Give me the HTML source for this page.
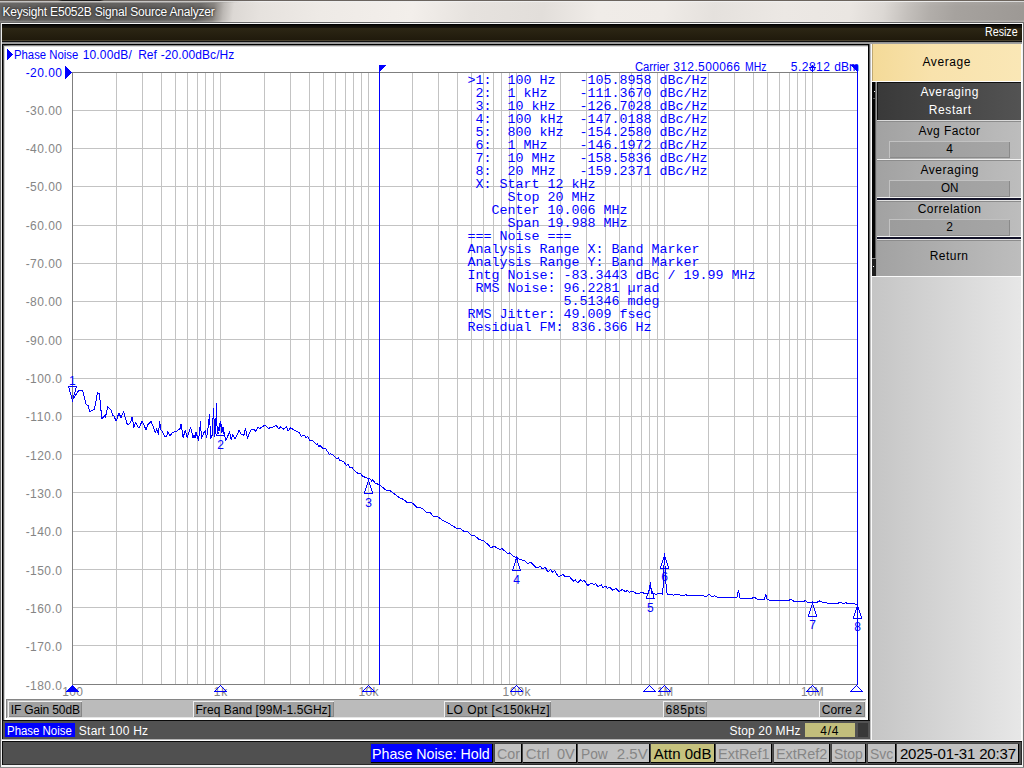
<!DOCTYPE html>
<html lang="en"><head><meta charset="utf-8"><title>Keysight E5052B Signal Source Analyzer</title>
<style>
html,body{margin:0;padding:0;width:1024px;height:768px;overflow:hidden;background:#fff}
body{position:relative;font-family:'Liberation Sans', sans-serif;font-size:12px}
#scr div{position:absolute;box-sizing:border-box}
#scr span{position:absolute;white-space:pre;font-family:'Liberation Sans', sans-serif}
#plot{position:absolute;left:0;top:0;font-family:'Liberation Sans', sans-serif}
#mk{position:absolute;left:467.5px;top:74.35px;margin:0;font-family:'Liberation Mono', monospace;font-size:13.333px;line-height:13px;color:#0000ff;white-space:pre}
</style></head><body><div id="scr" style="position:absolute;left:0;top:0;width:1024px;height:768px;overflow:hidden">
<div style="left:0px;top:0px;width:1024px;height:22px;background:linear-gradient(180deg,rgba(255,255,255,.08) 0,rgba(255,255,255,0) 30%,rgba(255,255,255,0) 90%,rgba(255,255,255,.25) 100%),linear-gradient(97deg,#666462 0,#5d5b59 60px,#605e5c 150px,#6a6866 200px,#85817d 213px,#bcb8b4 223px,#dcd8d4 233px,#e6e2de 260px,#eeeae6 320px,#f3efeb 410px,#e6e2de 470px,#e2deda 540px,#f0ece8 595px,#efebe7 660px,#e5e1dd 710px,#ece8e4 780px,#eae6e2 845px,#dcd8d4 878px,#c4c0bc 902px,#b2aeaa 924px,#a6a29e 950px,#9c9894 1024px);"></div>
<div style="left:0px;top:0px;width:1024px;height:1px;background:linear-gradient(90deg,#5e564e 0,#5e564e 58px,#1c1a18 62px,#1c1a18 100px,#6a6460 104px,#6c645c 1024px);"></div>
<div style="left:0px;top:1px;width:1024px;height:1px;background:linear-gradient(90deg,#c4c2c0 0,#c8c6c4 200px,#efefef 260px,#efefef 900px,#d8d8d8 1024px);"></div>
<div style="left:0px;top:2px;width:1024px;height:1px;background:linear-gradient(90deg,rgba(160,158,156,.8) 0,rgba(160,158,156,.8) 200px,rgba(255,255,255,0) 240px);"></div>
<div style="left:0px;top:22px;width:1px;height:746px;background:#6c6c6c;"></div>
<div style="left:1px;top:22px;width:1px;height:745px;background:#ececec;"></div>
<div style="left:1023px;top:22px;width:1px;height:746px;background:#707070;"></div>
<div style="left:1022px;top:22px;width:1px;height:745px;background:#f4f4f4;"></div>
<div style="left:1px;top:22px;width:1022px;height:1px;background:#6a6a6a;"></div>
<div style="left:1px;top:23px;width:1022px;height:1px;background:#f6f6f6;"></div>
<div style="left:1px;top:765px;width:1022px;height:2px;background:#f4f4f4;"></div>
<div style="left:0px;top:767px;width:1024px;height:1px;background:#8c8c8c;"></div>
<div style="left:2px;top:24px;width:1020px;height:18px;background:linear-gradient(180deg,#000 0,#000 1px,#0c0a06 1px,#0c0a06 2px,#12100a 2px,#12100a 3px,#18140c 3px,#18140c 4px,#2c2614 4px,#201a0c 16px,#4a4230 16px,#4a4230 17px,#101010 17px);"></div>
<div style="left:2px;top:42px;width:1020px;height:2px;background:linear-gradient(180deg,#8e8e8e,#a6a6a6);"></div>
<div style="left:2px;top:44px;width:868px;height:677px;background:#000;"></div>
<div style="left:3px;top:45px;width:865px;height:675px;background:#fff;"></div>
<div style="left:3px;top:45px;width:865px;height:1px;background:linear-gradient(90deg,#555,#8a8a8a 8px,#8a8a8a);"></div>
<div style="left:3px;top:46px;width:865px;height:1px;background:#dcdcdc;"></div>
<div style="left:3px;top:45px;width:1px;height:675px;background:#5a5a5a;"></div>
<div style="left:4px;top:46px;width:1px;height:674px;background:#cfcfcf;"></div>
<div style="left:869px;top:44px;width:1px;height:677px;background:#5c5c5c;"></div>
<div style="left:870px;top:44px;width:1px;height:696px;background:#bdbdbd;"></div>
<div style="left:871px;top:44px;width:1px;height:696px;background:#fafafa;"></div>
<div style="left:6px;top:699px;width:860px;height:19px;background:#bbbbbb;box-shadow:inset 1px 1px 0 #858585,inset -1px -1px 0 #e6e6e6;"></div>
<div style="left:8px;top:701px;width:74px;height:16px;background:#a1a1a1;box-shadow:inset 1px 1px 0 #f0f0f0,inset -1px -1px 0 #868686;"></div>
<div style="left:193px;top:701px;width:140.5px;height:16px;background:#a1a1a1;box-shadow:inset 1px 1px 0 #f0f0f0,inset -1px -1px 0 #868686;"></div>
<div style="left:444px;top:701px;width:107px;height:16px;background:#a1a1a1;box-shadow:inset 1px 1px 0 #f0f0f0,inset -1px -1px 0 #868686;"></div>
<div style="left:663px;top:701px;width:43.5px;height:16px;background:#a1a1a1;box-shadow:inset 1px 1px 0 #f0f0f0,inset -1px -1px 0 #868686;"></div>
<div style="left:819px;top:701px;width:46px;height:16px;background:#a1a1a1;box-shadow:inset 1px 1px 0 #f0f0f0,inset -1px -1px 0 #868686;"></div>
<div style="left:2px;top:720px;width:868px;height:19px;background:#525252;box-shadow:inset 0 1px 0 #0a0a0a,inset 1px 0 0 #0a0a0a;"></div>
<div style="left:2px;top:739px;width:868px;height:1px;background:#b4b4b4;"></div>
<div style="left:5px;top:723px;width:69.5px;height:14px;background:#0000ff;"></div>
<div style="left:804.5px;top:723px;width:50.5px;height:14px;background:#c2be7c;"></div>
<div style="left:857.5px;top:723px;width:10.5px;height:14px;background:#383838;"></div>
<div style="left:872px;top:44px;width:149px;height:696px;background:linear-gradient(90deg,#c5c5c5,#e7e7e7);"></div>
<div style="left:1021px;top:44px;width:1px;height:696px;background:#fcfcfc;"></div>
<div style="left:872px;top:44px;width:149px;height:37px;background:linear-gradient(90deg,#f4da98,#f8e2ac 40%,#fae7b6);box-shadow:inset 1px 0 0 #bfa873;"></div>
<div style="left:872px;top:81px;width:149px;height:1px;background:#fdfdfd;"></div>
<div style="left:872px;top:82px;width:3px;height:176px;background:#030303;"></div>
<div style="left:875px;top:82px;width:1px;height:194px;background:#5c5c5c;"></div>
<div style="left:876px;top:82px;width:1px;height:194px;background:#9a9a9a;"></div>
<div style="left:872px;top:258px;width:4px;height:18px;background:#1e1e1e;"></div>
<div style="left:873px;top:266px;width:1px;height:1px;background:#fff;"></div>
<div style="left:872px;top:258px;width:4px;height:1px;background:#8a8a8a;"></div>
<div style="left:874px;top:91px;width:1px;height:1px;background:#f0f0f0;"></div>
<div style="left:873px;top:98px;width:2px;height:1px;background:#555;"></div>
<div style="left:877px;top:82px;width:144px;height:38px;background:linear-gradient(90deg,#393939,#535353);box-shadow:inset 0 1px 0 #101010,inset 1px 0 0 #101010;"></div>
<div style="left:877px;top:120px;width:144px;height:1px;background:#dadada;"></div>
<div style="left:877px;top:121px;width:144px;height:38px;background:linear-gradient(90deg,#a2a2a2,#bdbdbd);box-shadow:inset 0 1px 0 #8c8c8c;"></div>
<div style="left:877px;top:159px;width:144px;height:1px;background:#f2f2f2;"></div>
<div style="left:889px;top:141px;width:121px;height:16.5px;background:linear-gradient(90deg,#9c9c9c,#a6a6a6);box-shadow:inset 1px 1px 0 #c2c2c2,inset -1px -1px 0 #8a8a8a;"></div>
<div style="left:877px;top:160px;width:144px;height:37px;background:linear-gradient(90deg,#a2a2a2,#bdbdbd);box-shadow:inset 0 1px 0 #8c8c8c;"></div>
<div style="left:877px;top:197px;width:144px;height:1px;background:#f2f2f2;"></div>
<div style="left:877px;top:198px;width:144px;height:2px;background:#14142a;"></div>
<div style="left:877px;top:200px;width:144px;height:1px;background:#e2e2e2;"></div>
<div style="left:889px;top:180px;width:121px;height:16.5px;background:linear-gradient(90deg,#9c9c9c,#a6a6a6);box-shadow:inset 1px 1px 0 #c2c2c2,inset -1px -1px 0 #8a8a8a;"></div>
<div style="left:877px;top:201px;width:144px;height:35px;background:linear-gradient(90deg,#a2a2a2,#bdbdbd);box-shadow:inset 0 1px 0 #8c8c8c;"></div>
<div style="left:877px;top:236px;width:144px;height:1px;background:#f2f2f2;"></div>
<div style="left:877px;top:237px;width:144px;height:2px;background:#14142a;"></div>
<div style="left:877px;top:239px;width:144px;height:1px;background:#e2e2e2;"></div>
<div style="left:889px;top:219px;width:121px;height:16.5px;background:linear-gradient(90deg,#9c9c9c,#a6a6a6);box-shadow:inset 1px 1px 0 #c2c2c2,inset -1px -1px 0 #8a8a8a;"></div>
<div style="left:877px;top:240px;width:144px;height:36px;background:linear-gradient(90deg,#a2a2a2,#bdbdbd);box-shadow:inset 0 1px 0 #8c8c8c;"></div>
<div style="left:877px;top:276px;width:144px;height:1px;background:#fafafa;"></div>
<div style="left:872px;top:276px;width:5px;height:1px;background:#fafafa;"></div>
<div style="left:2px;top:740px;width:1020px;height:1px;background:#fcfcfc;"></div>
<div style="left:2px;top:741px;width:1020px;height:24px;background:#505050;box-shadow:inset 0 1px 0 #0a0a0a,inset 1px 0 0 #0a0a0a,inset 0 -1px 0 #2a2a2a,inset -1px 0 0 #2a2a2a;"></div>
<div style="left:369.5px;top:743px;width:123.5px;height:20px;background:#000;box-shadow:inset 1px 1px 0 #444;"></div>
<div style="left:370.5px;top:744px;width:121.5px;height:18px;background:#0000ff;"></div>
<div style="left:493.7px;top:743px;width:28.30000000000001px;height:20px;background:#000;box-shadow:inset 1px 1px 0 #444;"></div>
<div style="left:494.7px;top:744px;width:26.30000000000001px;height:18px;background:#c2c2c2;"></div>
<div style="left:522.4px;top:743px;width:54.89999999999998px;height:20px;background:#000;box-shadow:inset 1px 1px 0 #444;"></div>
<div style="left:523.4px;top:744px;width:52.89999999999998px;height:18px;background:#c2c2c2;"></div>
<div style="left:577.3px;top:743px;width:72.70000000000005px;height:20px;background:#000;box-shadow:inset 1px 1px 0 #444;"></div>
<div style="left:578.3px;top:744px;width:70.70000000000005px;height:18px;background:#c2c2c2;"></div>
<div style="left:650.4px;top:743px;width:64.20000000000005px;height:20px;background:#000;box-shadow:inset 1px 1px 0 #444;"></div>
<div style="left:651.4px;top:744px;width:62.200000000000045px;height:18px;background:#c6c27e;"></div>
<div style="left:714.6px;top:743px;width:57.89999999999998px;height:20px;background:#000;box-shadow:inset 1px 1px 0 #444;"></div>
<div style="left:715.6px;top:744px;width:55.89999999999998px;height:18px;background:#c2c2c2;"></div>
<div style="left:772.7px;top:743px;width:57.39999999999998px;height:20px;background:#000;box-shadow:inset 1px 1px 0 #444;"></div>
<div style="left:773.7px;top:744px;width:55.39999999999998px;height:18px;background:#c2c2c2;"></div>
<div style="left:830.6px;top:743px;width:35.799999999999955px;height:20px;background:#000;box-shadow:inset 1px 1px 0 #444;"></div>
<div style="left:831.6px;top:744px;width:33.799999999999955px;height:18px;background:#c2c2c2;"></div>
<div style="left:866.6px;top:743px;width:29.399999999999977px;height:20px;background:#000;box-shadow:inset 1px 1px 0 #444;"></div>
<div style="left:867.6px;top:744px;width:27.399999999999977px;height:18px;background:#c2c2c2;"></div>
<div style="left:896px;top:743px;width:123px;height:20px;background:#000;box-shadow:inset 1px 1px 0 #444;"></div>
<div style="left:897px;top:744px;width:121px;height:18px;background:#c2c2c2;"></div>
<span style="left:984.82px;top:24px;font-size:12px;line-height:16px;transform-origin:0 0;transform:scaleX(0.8903);color:#fff;">Resize</span>
<span style="left:2.46px;top:4px;font-size:12px;line-height:16px;letter-spacing:-0.192px;color:#fff;text-shadow:0 0 3px #222,0 0 2px #333;">Keysight E5052B Signal Source Analyzer</span>
<span style="left:10.76px;top:702px;font-size:12px;line-height:16px;letter-spacing:-0.140px;color:#000;">IF Gain 50dB</span>
<span style="left:195.46px;top:702px;font-size:12px;line-height:16px;letter-spacing:0.072px;color:#000;">Freq Band [99M-1.5GHz]</span>
<span style="left:446.46px;top:702px;font-size:12px;line-height:16px;letter-spacing:0.446px;color:#000;">LO Opt [&lt;150kHz]</span>
<span style="left:665.46px;top:702px;font-size:12px;line-height:16px;letter-spacing:0.710px;color:#000;">685pts</span>
<span style="left:821.76px;top:702px;font-size:12px;line-height:16px;letter-spacing:0.027px;color:#000;">Corre 2</span>
<span style="left:6.99px;top:723px;font-size:12px;line-height:16px;transform-origin:0 0;transform:scaleX(0.9527);color:#fff;">Phase Noise</span>
<span style="left:78.86px;top:723px;font-size:12px;line-height:16px;letter-spacing:0.225px;color:#fff;">Start 100 Hz</span>
<span style="left:729.46px;top:723px;font-size:12px;line-height:16px;letter-spacing:0.170px;color:#fff;">Stop 20 MHz</span>
<span style="left:820.26px;top:723px;font-size:12px;line-height:16px;letter-spacing:0.796px;color:#000;">4/4</span>
<span style="left:922.46px;top:54px;font-size:12px;line-height:16px;letter-spacing:0.599px;color:#000;">Average</span>
<span style="left:920.46px;top:84px;font-size:12px;line-height:16px;letter-spacing:0.506px;color:#fff;">Averaging</span>
<span style="left:928.76px;top:102px;font-size:12px;line-height:16px;letter-spacing:0.599px;color:#fff;">Restart</span>
<span style="left:918.46px;top:123px;font-size:12px;line-height:16px;letter-spacing:0.419px;color:#000;">Avg Factor</span>
<span style="left:946.16px;top:141px;font-size:12px;line-height:16px;letter-spacing:0.000px;color:#000;">4</span>
<span style="left:920.46px;top:162px;font-size:12px;line-height:16px;letter-spacing:0.531px;color:#000;">Averaging</span>
<span style="left:940.78px;top:180px;font-size:12px;line-height:16px;transform-origin:0 0;transform:scaleX(0.9693);color:#000;">ON</span>
<span style="left:917.76px;top:201px;font-size:12px;line-height:16px;letter-spacing:0.448px;color:#000;">Correlation</span>
<span style="left:946.16px;top:219px;font-size:12px;line-height:16px;letter-spacing:0.000px;color:#000;">2</span>
<span style="left:929.76px;top:248px;font-size:12px;line-height:16px;letter-spacing:0.450px;color:#000;">Return</span>
<span style="left:372.36px;top:744px;font-size:15px;line-height:20px;transform-origin:0 0;transform:scaleX(0.9480);color:#fff;">Phase Noise: Hold</span>
<span style="left:496.66px;top:744px;font-size:15px;line-height:20px;transform-origin:0 0;transform:scaleX(0.9508);color:#868686;">Cor</span>
<span style="left:525.83px;top:744px;font-size:15px;line-height:20px;letter-spacing:0.174px;color:#868686;">Ctrl</span>
<span style="left:556.85px;top:744px;font-size:15px;line-height:20px;transform-origin:0 0;transform:scaleX(0.9701);color:#868686;">0V</span>
<span style="left:580.88px;top:744px;font-size:15px;line-height:20px;transform-origin:0 0;transform:scaleX(0.9160);color:#868686;">Pow</span>
<span style="left:616.83px;top:744px;font-size:15px;line-height:20px;letter-spacing:-0.003px;color:#868686;">2.5V</span>
<span style="left:653.83px;top:744px;font-size:15px;line-height:20px;letter-spacing:0.015px;color:#000;">Attn 0dB</span>
<span style="left:717.65px;top:744px;font-size:15px;line-height:20px;transform-origin:0 0;transform:scaleX(0.9652);color:#868686;">ExtRef1</span>
<span style="left:776.15px;top:744px;font-size:15px;line-height:20px;transform-origin:0 0;transform:scaleX(0.9614);color:#868686;">ExtRef2</span>
<span style="left:834.37px;top:744px;font-size:15px;line-height:20px;transform-origin:0 0;transform:scaleX(0.9319);color:#868686;">Stop</span>
<span style="left:869.87px;top:744px;font-size:15px;line-height:20px;transform-origin:0 0;transform:scaleX(0.9296);color:#868686;">Svc</span>
<span style="left:899.93px;top:744px;font-size:15px;line-height:20px;letter-spacing:-0.153px;color:#000;">2025-01-31 20:37</span>
<span style="left:14.29px;top:47px;font-size:12px;line-height:16px;transform-origin:0 0;transform:scaleX(0.9438);color:#0000ff;">Phase Noise</span>
<span style="left:82.76px;top:47px;font-size:12px;line-height:16px;letter-spacing:0.133px;color:#0000ff;">10.00dB/</span>
<span style="left:138.26px;top:47px;font-size:12px;line-height:16px;letter-spacing:-0.104px;color:#0000ff;">Ref</span>
<span style="left:160.76px;top:47px;font-size:12px;line-height:16px;letter-spacing:0.080px;color:#0000ff;">-20.00dBc/Hz</span>
<span style="left:634.99px;top:59px;font-size:12px;line-height:16px;transform-origin:0 0;transform:scaleX(0.9356);color:#0000ff;">Carrier</span>
<span style="left:673.26px;top:59px;font-size:12px;line-height:16px;letter-spacing:0.375px;color:#0000ff;">312.500066</span>
<span style="left:744.53px;top:59px;font-size:12px;line-height:16px;transform-origin:0 0;transform:scaleX(0.8689);color:#0000ff;">MHz</span>
<span style="left:790.86px;top:59px;font-size:12px;line-height:16px;letter-spacing:0.455px;color:#0000ff;">5.2812</span>
<span style="left:834.26px;top:59px;font-size:12px;line-height:16px;letter-spacing:0.046px;color:#0000ff;">dBm</span>
<span style="left:25.66px;top:65px;font-size:12px;line-height:16px;letter-spacing:0.450px;color:#0000ff;">-20.00</span>
<span style="left:25.66px;top:103px;font-size:12px;line-height:16px;letter-spacing:0.450px;color:#858585;">-30.00</span>
<span style="left:25.66px;top:141px;font-size:12px;line-height:16px;letter-spacing:0.450px;color:#858585;">-40.00</span>
<span style="left:25.66px;top:179px;font-size:12px;line-height:16px;letter-spacing:0.450px;color:#858585;">-50.00</span>
<span style="left:25.66px;top:218px;font-size:12px;line-height:16px;letter-spacing:0.450px;color:#858585;">-60.00</span>
<span style="left:25.66px;top:256px;font-size:12px;line-height:16px;letter-spacing:0.450px;color:#858585;">-70.00</span>
<span style="left:25.66px;top:294px;font-size:12px;line-height:16px;letter-spacing:0.450px;color:#858585;">-80.00</span>
<span style="left:25.66px;top:333px;font-size:12px;line-height:16px;letter-spacing:0.450px;color:#858585;">-90.00</span>
<span style="left:25.66px;top:371px;font-size:12px;line-height:16px;letter-spacing:0.450px;color:#858585;">-100.0</span>
<span style="left:25.66px;top:409px;font-size:12px;line-height:16px;letter-spacing:0.628px;color:#858585;">-110.0</span>
<span style="left:25.66px;top:448px;font-size:12px;line-height:16px;letter-spacing:0.450px;color:#858585;">-120.0</span>
<span style="left:25.66px;top:486px;font-size:12px;line-height:16px;letter-spacing:0.450px;color:#858585;">-130.0</span>
<span style="left:25.66px;top:524px;font-size:12px;line-height:16px;letter-spacing:0.450px;color:#858585;">-140.0</span>
<span style="left:25.66px;top:563px;font-size:12px;line-height:16px;letter-spacing:0.450px;color:#858585;">-150.0</span>
<span style="left:25.66px;top:601px;font-size:12px;line-height:16px;letter-spacing:0.450px;color:#858585;">-160.0</span>
<span style="left:25.66px;top:639px;font-size:12px;line-height:16px;letter-spacing:0.450px;color:#858585;">-170.0</span>
<span style="left:25.66px;top:678px;font-size:12px;line-height:16px;letter-spacing:0.450px;color:#858585;">-180.0</span>
<span style="left:62.31px;top:684px;font-size:12px;line-height:16px;letter-spacing:0.274px;color:#858585;">100</span>
<span style="left:213.81px;top:684px;font-size:12px;line-height:16px;letter-spacing:0.893px;color:#858585;">1k</span>
<span style="left:358.56px;top:684px;font-size:12px;line-height:16px;letter-spacing:0.360px;color:#858585;">10k</span>
<span style="left:502.56px;top:684px;font-size:12px;line-height:16px;letter-spacing:0.683px;color:#858585;">100k</span>
<span style="left:656.58px;top:684px;font-size:12px;line-height:16px;transform-origin:0 0;transform:scaleX(0.9620);color:#858585;">1M</span>
<span style="left:801.33px;top:684px;font-size:12px;line-height:16px;transform-origin:0 0;transform:scaleX(0.9657);color:#858585;">10M</span>
<svg id="plot" width="1024" height="768" viewBox="0 0 1024 768" shape-rendering="crispEdges">
<rect x="116" y="72" width="1" height="612" fill="#c3c3c3"/>
<rect x="142" y="72" width="1" height="612" fill="#c3c3c3"/>
<rect x="161" y="72" width="1" height="612" fill="#c3c3c3"/>
<rect x="175" y="72" width="1" height="612" fill="#c3c3c3"/>
<rect x="187" y="72" width="1" height="612" fill="#c3c3c3"/>
<rect x="197" y="72" width="1" height="612" fill="#c3c3c3"/>
<rect x="205" y="72" width="1" height="612" fill="#c3c3c3"/>
<rect x="213" y="72" width="1" height="612" fill="#c3c3c3"/>
<rect x="264" y="72" width="1" height="612" fill="#c3c3c3"/>
<rect x="290" y="72" width="1" height="612" fill="#c3c3c3"/>
<rect x="309" y="72" width="1" height="612" fill="#c3c3c3"/>
<rect x="323" y="72" width="1" height="612" fill="#c3c3c3"/>
<rect x="335" y="72" width="1" height="612" fill="#c3c3c3"/>
<rect x="345" y="72" width="1" height="612" fill="#c3c3c3"/>
<rect x="353" y="72" width="1" height="612" fill="#c3c3c3"/>
<rect x="361" y="72" width="1" height="612" fill="#c3c3c3"/>
<rect x="220" y="72" width="1" height="612" fill="#c3c3c3"/>
<rect x="412" y="72" width="1" height="612" fill="#c3c3c3"/>
<rect x="438" y="72" width="1" height="612" fill="#c3c3c3"/>
<rect x="457" y="72" width="1" height="612" fill="#c3c3c3"/>
<rect x="471" y="72" width="1" height="612" fill="#c3c3c3"/>
<rect x="483" y="72" width="1" height="612" fill="#c3c3c3"/>
<rect x="493" y="72" width="1" height="612" fill="#c3c3c3"/>
<rect x="501" y="72" width="1" height="612" fill="#c3c3c3"/>
<rect x="509" y="72" width="1" height="612" fill="#c3c3c3"/>
<rect x="368" y="72" width="1" height="612" fill="#c3c3c3"/>
<rect x="560" y="72" width="1" height="612" fill="#c3c3c3"/>
<rect x="586" y="72" width="1" height="612" fill="#c3c3c3"/>
<rect x="605" y="72" width="1" height="612" fill="#c3c3c3"/>
<rect x="619" y="72" width="1" height="612" fill="#c3c3c3"/>
<rect x="631" y="72" width="1" height="612" fill="#c3c3c3"/>
<rect x="641" y="72" width="1" height="612" fill="#c3c3c3"/>
<rect x="649" y="72" width="1" height="612" fill="#c3c3c3"/>
<rect x="657" y="72" width="1" height="612" fill="#c3c3c3"/>
<rect x="516" y="72" width="1" height="612" fill="#c3c3c3"/>
<rect x="708" y="72" width="1" height="612" fill="#c3c3c3"/>
<rect x="734" y="72" width="1" height="612" fill="#c3c3c3"/>
<rect x="753" y="72" width="1" height="612" fill="#c3c3c3"/>
<rect x="767" y="72" width="1" height="612" fill="#c3c3c3"/>
<rect x="779" y="72" width="1" height="612" fill="#c3c3c3"/>
<rect x="789" y="72" width="1" height="612" fill="#c3c3c3"/>
<rect x="797" y="72" width="1" height="612" fill="#c3c3c3"/>
<rect x="805" y="72" width="1" height="612" fill="#c3c3c3"/>
<rect x="664" y="72" width="1" height="612" fill="#c3c3c3"/>
<rect x="812" y="72" width="1" height="612" fill="#c3c3c3"/>
<rect x="72" y="110" width="785" height="1" fill="#c3c3c3"/>
<rect x="72" y="148" width="785" height="1" fill="#c3c3c3"/>
<rect x="72" y="186" width="785" height="1" fill="#c3c3c3"/>
<rect x="72" y="225" width="785" height="1" fill="#c3c3c3"/>
<rect x="72" y="263" width="785" height="1" fill="#c3c3c3"/>
<rect x="72" y="301" width="785" height="1" fill="#c3c3c3"/>
<rect x="72" y="339" width="785" height="1" fill="#c3c3c3"/>
<rect x="72" y="378" width="785" height="1" fill="#c3c3c3"/>
<rect x="72" y="416" width="785" height="1" fill="#c3c3c3"/>
<rect x="72" y="454" width="785" height="1" fill="#c3c3c3"/>
<rect x="72" y="492" width="785" height="1" fill="#c3c3c3"/>
<rect x="72" y="531" width="785" height="1" fill="#c3c3c3"/>
<rect x="72" y="569" width="785" height="1" fill="#c3c3c3"/>
<rect x="72" y="607" width="785" height="1" fill="#c3c3c3"/>
<rect x="72" y="645" width="785" height="1" fill="#c3c3c3"/>
<rect x="72" y="72" width="786" height="1" fill="#7f7f7f"/>
<rect x="72" y="684" width="786" height="1" fill="#7f7f7f"/>
<rect x="72" y="72" width="1" height="613" fill="#7f7f7f"/>
<rect x="857" y="72" width="1" height="613" fill="#7f7f7f"/>
<polyline points="72.5,400.0 78.8,390.4 82.5,390.4 86.2,404.4 88.1,405.6 89.6,411.9 94.4,409.4 97.5,392.8 99.4,394.0 101.9,419.4 104.4,415.0 105.2,418.1 107.8,406.5 111.0,410.0 112.5,415.0 114.0,416.2 116.2,421.2 118.8,413.1 121.0,417.5 123.5,411.5 127.5,425.2 130.2,423.1 132.2,416.9 133.8,427.5 135.6,422.5 137.5,426.2 139.0,428.1 142.2,420.9 146.2,430.2 147.5,425.0 151.2,421.5 155.6,433.1 156.5,428.1 158.5,435.0 159.5,421.5 161.0,430.0 162.5,431.9 164.8,437.1 166.9,436.0 167.8,431.5 169.8,436.2 172.5,432.5 176.9,431.2 180.0,428.5 181.2,423.8 183.1,437.8 185.2,430.2 187.2,437.5 190.6,427.5 193.1,437.8 194.0,434.6 195.0,438.4 196.0,432.1 198.5,440.5 199.8,430.2 200.4,421.1 201.5,438.4 203.8,432.8 205.4,430.5 206.5,438.4 208.5,425.2 209.5,414.0 210.6,438.4 212.2,435.2 213.5,408.0 214.8,436.5 215.9,421.5 216.5,403.0 217.2,434.0 218.8,433.4 220.2,421.5 221.9,432.8 223.1,427.1 224.4,434.0 225.6,440.5 227.5,437.1 229.5,431.2 231.2,440.2 232.8,434.6 235.2,438.8 239.0,430.5 241.2,434.0 244.0,435.2 245.5,428.0 247.5,438.4 250.6,430.2 253.8,429.0 255.9,431.5 257.8,427.5 260.0,428.4 265.0,425.0 268.2,428.4 272.5,427.1 276.2,425.5 278.8,429.2 280.6,426.8 283.8,429.2 286.5,426.5 288.1,431.2 290.6,427.8 293.8,430.0 299.4,432.8 300.0,433.8 301.2,436.2 305.0,435.6 306.2,438.1 307.8,436.5 310.0,441.2 312.2,440.0 316.2,444.4 317.5,443.5 318.8,446.5 320.0,445.6 323.1,448.8 325.6,448.5 329.4,454.4 330.6,453.8 332.8,455.0 336.9,458.5 338.5,457.5 339.8,461.2 341.2,460.6 343.8,461.5 346.2,465.6 348.1,463.8 349.4,467.5 351.9,467.5 355.0,471.0 358.8,474.0 360.6,473.5 362.5,476.2 368.1,478.4 369.8,478.6 371.9,481.2 372.5,479.4 374.8,482.8 379.4,484.8 380.0,485.3 386.2,490.3 389.4,490.3 398.8,497.3 403.4,499.4 407.3,502.5 412.8,503.1 416.7,507.2 422.2,508.3 426.1,512.2 430.0,512.2 433.1,516.1 438.1,516.9 442.5,520.3 448.0,522.8 451.9,525.5 457.3,528.6 460.5,528.6 464.4,531.7 467.5,531.7 471.4,535.3 474.5,535.6 479.2,539.5 483.9,541.1 487.8,544.2 490.9,547.8 494.1,546.2 500.3,549.7 501.9,548.4 508.1,554.1 509.7,552.8 513.6,556.7 516.7,557.5 520.6,559.8 524.5,560.6 527.7,563.4 530.8,562.2 536.2,567.5 540.9,566.7 541.7,568.3 545.6,567.8 548.0,572.2 550.3,569.4 552.7,572.2 554.7,570.3 558.4,576.9 562.8,574.5 565.2,576.9 569.8,576.9 573.8,581.6 575.3,579.7 577.7,583.1 580.8,579.7 582.3,581.6 583.9,580.0 587.8,585.5 591.7,583.1 594.1,584.7 595.6,583.1 598.0,587.0 601.1,584.7 602.7,587.5 605.8,586.2 607.3,588.6 609.7,587.0 612.8,590.2 615.9,588.6 619.4,591.7 622.2,589.4 625.3,591.7 627.7,590.2 629.2,592.5 633.1,590.9 636.2,593.8 639.4,593.3 641.7,592.2 644.1,593.3 648.5,593.5 649.5,589.0 650.3,582.3 651.0,589.0 652.0,593.8 656.6,594.1 658.9,593.3 662.8,594.1 663.5,575.0 664.5,555.0 665.5,575.0 666.3,589.4 667.5,594.8 671.4,594.1 673.8,595.3 676.1,594.1 682.3,595.6 686.2,594.8 687.5,595.6 695.0,596.0 702.5,595.6 706.2,596.8 709.0,594.1 711.9,597.1 714.7,595.6 717.5,597.5 728.8,597.9 737.2,597.1 738.5,589.6 740.0,598.4 751.2,598.8 754.1,597.1 757.8,599.4 764.4,599.4 765.7,594.3 767.2,599.8 771.9,600.3 788.8,600.3 791.0,599.4 794.4,601.6 803.8,601.6 805.2,600.3 807.5,602.8 816.9,602.4 819.7,600.9 822.5,602.4 830.0,603.5 837.5,603.5 840.3,602.2 843.1,603.5 845.9,602.8 848.8,603.9 854.4,603.5 857.2,605.0" fill="none" stroke="#0000ff" stroke-width="1" stroke-linejoin="bevel"/>
<rect x="379" y="66" width="1" height="619" fill="#0000ff"/>
<polygon points="379,65 386.5,65 379,72.5" fill="#0000ff"/>
<rect x="857" y="66" width="1" height="619" fill="#0000ff"/>
<polygon points="850.5,65 858,65 858,72.5" fill="#0000ff"/>
<rect x="812" y="65" width="1" height="7" fill="#0000ff"/>
<rect x="809" y="67" width="7" height="1" fill="#0000ff"/>
<polygon points="65,66 65,79 72,72.5" fill="#0000ff"/>
<polygon points="7,49 7,60 13,54.5" fill="#0000ff"/>
<polygon points="72.5,684.5 65.5,692 79.5,692" fill="#0000ff"/>
<polygon points="220.5,685.5 214.5,691.5 226.5,691.5" fill="none" stroke="#0000ff" stroke-width="1"/>
<polygon points="368.5,685.5 362.5,691.5 374.5,691.5" fill="none" stroke="#0000ff" stroke-width="1"/>
<polygon points="516.5,685.5 510.5,691.5 522.5,691.5" fill="none" stroke="#0000ff" stroke-width="1"/>
<polygon points="649.5,685.5 643.5,691.5 655.5,691.5" fill="none" stroke="#0000ff" stroke-width="1"/>
<polygon points="664.5,685.5 658.5,691.5 670.5,691.5" fill="none" stroke="#0000ff" stroke-width="1"/>
<polygon points="812.5,685.5 806.5,691.5 818.5,691.5" fill="none" stroke="#0000ff" stroke-width="1"/>
<polygon points="856.5,685.5 850.5,691.5 862.5,691.5" fill="none" stroke="#0000ff" stroke-width="1"/>
<polygon points="220.5,422.5 216.5,435.5 224.5,435.5" fill="none" stroke="#0000ff" stroke-width="1"/>
<text x="220.5" y="448.5" text-anchor="middle" font-size="12" fill="#0000ff">2</text>
<polygon points="368.5,480 364.5,493 372.5,493" fill="none" stroke="#0000ff" stroke-width="1"/>
<text x="368.5" y="507" text-anchor="middle" font-size="12" fill="#0000ff">3</text>
<polygon points="516.5,557.8 512.5,570.8 520.5,570.8" fill="none" stroke="#0000ff" stroke-width="1"/>
<text x="516.5" y="583.8" text-anchor="middle" font-size="12" fill="#0000ff">4</text>
<polygon points="650.3,585.5 646.3,598.5 654.3,598.5" fill="none" stroke="#0000ff" stroke-width="1"/>
<text x="650.3" y="611.5" text-anchor="middle" font-size="12" fill="#0000ff">5</text>
<polygon points="664.5,555 660.5,568 668.5,568" fill="none" stroke="#0000ff" stroke-width="1"/>
<text x="664.5" y="581" text-anchor="middle" font-size="12" fill="#0000ff">6</text>
<polygon points="812.5,603 808.5,616 816.5,616" fill="none" stroke="#0000ff" stroke-width="1"/>
<text x="812.5" y="629" text-anchor="middle" font-size="12" fill="#0000ff">7</text>
<polygon points="857.5,605 853.5,618 861.5,618" fill="none" stroke="#0000ff" stroke-width="1"/>
<text x="857.5" y="631" text-anchor="middle" font-size="12" fill="#0000ff">8</text>
<polygon points="72.5,400.5 68.5,386.5 76.5,386.5" fill="none" stroke="#0000ff" stroke-width="1"/>
<text x="72.3" y="384.7" text-anchor="middle" font-size="12" fill="#0000ff">1</text>
</svg>
<pre id="mk">&gt;1:  100 Hz   -105.8958 dBc/Hz
 2:  1 kHz    -111.3670 dBc/Hz
 3:  10 kHz   -126.7028 dBc/Hz
 4:  100 kHz  -147.0188 dBc/Hz
 5:  800 kHz  -154.2580 dBc/Hz
 6:  1 MHz    -146.1972 dBc/Hz
 7:  10 MHz   -158.5836 dBc/Hz
 8:  20 MHz   -159.2371 dBc/Hz
 X: Start 12 kHz
     Stop 20 MHz
   Center 10.006 MHz
     Span 19.988 MHz
=== Noise ===
Analysis Range X: Band Marker
Analysis Range Y: Band Marker
Intg Noise: -83.3443 dBc / 19.99 MHz
 RMS Noise: 96.2281 µrad
            5.51346 mdeg
RMS Jitter: 49.009 fsec
Residual FM: 836.366 Hz</pre>
</div></body></html>
